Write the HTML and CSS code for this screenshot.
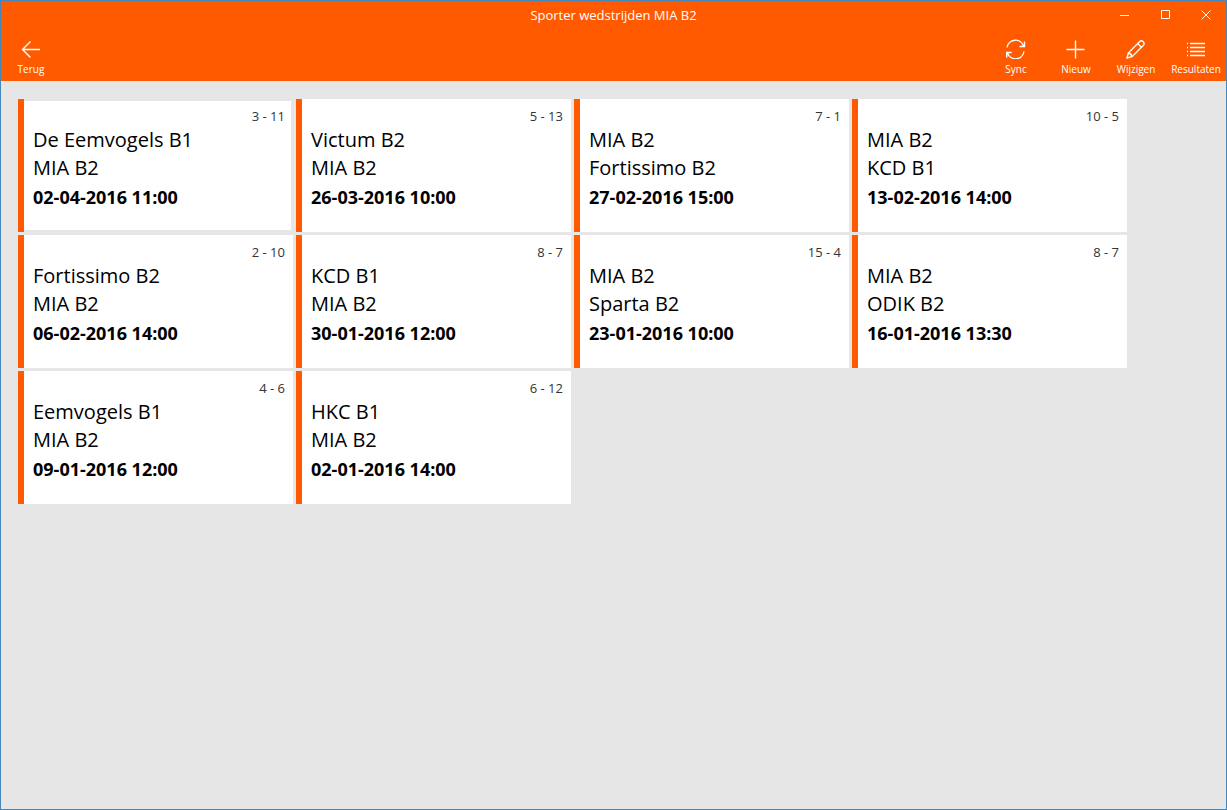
FILE: index.html
```html
<!DOCTYPE html>
<html lang="nl">
<head>
<meta charset="utf-8">
<meta name="viewport" content="width=device-width, initial-scale=1">
<title>Sporter wedstrijden MIA B2</title>
<link rel="stylesheet" href="styles.css">
</head>
<body>
<div class="window">
  <header class="header">
    <div class="titlebar">
      <h1 class="title">Sporter wedstrijden MIA B2</h1>
      <div class="window-controls">
        <button class="window-button" type="button" aria-label="Minimaliseren"><svg width="10" height="10" viewBox="0 0 10 10"><path d="M1 5.5h9"/></svg></button>
        <button class="window-button" type="button" aria-label="Maximaliseren"><svg width="10" height="10" viewBox="0 0 10 10"><path d="M1.500 .5h8v8h-8z"/></svg></button>
        <button class="window-button" type="button" aria-label="Sluiten"><svg width="10" height="10" viewBox="0 0 10 10"><path d="M.5 .5l9 9M9.500 .5l-9 9"/></svg></button>
      </div>
    </div>
    <nav class="commands">
      <button class="command" type="button">
        <svg width="20" height="20" viewBox="0 0 20 20"><path d="M19 10.500H1.500M9.500 2.500l-8 8 8 8"/></svg>
        <span>Terug</span>
      </button>
      <div class="command-group">
        <button class="command" type="button">
          <svg width="20" height="20" viewBox="0 0 20 20"><path d="M1 8.500A8.500 8.500 0 0 1 17.500 7M18.500 2.500v5h-5M18 12.500A8.500 8.500 0 0 1 1.500 14M.7 18.500v-5h5"/></svg>
          <span>Sync</span>
        </button>
        <button class="command" type="button">
          <svg width="20" height="20" viewBox="0 0 20 20"><path d="M9.500 1.500v18M.5 10.500h18"/></svg>
          <span>Nieuw</span>
        </button>
        <button class="command" type="button">
          <svg width="20" height="20" viewBox="0 0 20 20"><path d="M1 19l1.300-5L13.500 2.700a2.500 2.500 0 0 1 3.700 3.700L6 17.700zM11.700 4.500l3.700 3.700M2.300 14q3 .5 3.700 3.700"/></svg>
          <span>Wijzigen</span>
        </button>
        <button class="command" type="button">
          <svg width="20" height="20" viewBox="0 0 20 20"><path d="M4 4.500h15M4 8.500h15M4 12.500h15M4 16.500h15M1 4.500h1M1 8.500h1M1 12.500h1M1 16.500h1"/></svg>
          <span>Resultaten</span>
        </button>
      </div>
    </nav>
  </header>
  <main class="content">
    <ul class="matches">
      <li class="match match-focused"><span class="score">3 - 11</span><span class="team">De Eemvogels B1</span><span class="team">MIA B2</span><time class="date">02-04-2016 11:00</time></li>
      <li class="match"><span class="score">5 - 13</span><span class="team">Victum B2</span><span class="team">MIA B2</span><time class="date">26-03-2016 10:00</time></li>
      <li class="match"><span class="score">7 - 1</span><span class="team">MIA B2</span><span class="team">Fortissimo B2</span><time class="date">27-02-2016 15:00</time></li>
      <li class="match"><span class="score">10 - 5</span><span class="team">MIA B2</span><span class="team">KCD B1</span><time class="date">13-02-2016 14:00</time></li>
      <li class="match"><span class="score">2 - 10</span><span class="team">Fortissimo B2</span><span class="team">MIA B2</span><time class="date">06-02-2016 14:00</time></li>
      <li class="match"><span class="score">8 - 7</span><span class="team">KCD B1</span><span class="team">MIA B2</span><time class="date">30-01-2016 12:00</time></li>
      <li class="match"><span class="score">15 - 4</span><span class="team">MIA B2</span><span class="team">Sparta B2</span><time class="date">23-01-2016 10:00</time></li>
      <li class="match"><span class="score">8 - 7</span><span class="team">MIA B2</span><span class="team">ODIK B2</span><time class="date">16-01-2016 13:30</time></li>
      <li class="match"><span class="score">4 - 6</span><span class="team">Eemvogels B1</span><span class="team">MIA B2</span><time class="date">09-01-2016 12:00</time></li>
      <li class="match"><span class="score">6 - 12</span><span class="team">HKC B1</span><span class="team">MIA B2</span><time class="date">02-01-2016 14:00</time></li>
    </ul>
  </main>
</div>
</body>
</html>
```
FILE: styles.css
```css
* {
  box-sizing: border-box;
}

body {
  margin: 0;
  font-family: "Segoe UI", "Open Sans", "Noto Sans", sans-serif;
  color: #000;
}

.window {
  min-height: 100vh;
  border: 1px solid #4586bb;
  background: #e6e6e6;
}

.header {
  background: #ff5a00;
  color: #fff;
}

.titlebar {
  display: grid;
  grid-template-columns: 1fr auto 1fr;
  align-items: center;
  height: 27px;
}

.title {
  grid-column: 2;
  margin: 0;
  font-size: 13px;
  font-weight: 400;
  line-height: 20px;
}

.window-controls {
  display: flex;
  justify-content: flex-end;
}

.window-button,
.command {
  border: 0;
  padding: 0;
  background: none;
  color: inherit;
  font: inherit;
}

.window-button {
  display: flex;
  align-items: center;
  justify-content: center;
  width: 41px;
  height: 28px;
}

.header svg {
  fill: none;
  stroke: #fff;
  stroke-width: 1;
}

.header .command svg {
  stroke-width: 1.4;
}

.commands {
  display: flex;
  justify-content: space-between;
}

.command-group {
  display: flex;
}

.command {
  display: flex;
  flex-direction: column;
  align-items: center;
  gap: 2px;
  width: 60px;
  padding: 11px 0 4px;
  font-size: 10px;
  line-height: 16px;
}

.content {
  padding: 18px 17px;
}

.matches {
  display: grid;
  grid-template-columns: repeat(auto-fill, 275px);
  gap: 3px;
  margin: 0;
  padding: 0;
  list-style: none;
}

.match {
  display: flex;
  flex-direction: column;
  min-height: 133px;
  padding: 7px 8px 0 9px;
  border-left: 6px solid #ff5a00;
  background: #fff;
}

.match-focused {
  box-shadow: inset -2px -2px #e6e6e6, inset 0 2px #e6e6e6;
}

.score {
  align-self: flex-end;
  color: #333;
  font-size: 13px;
  line-height: 20px;
}

.team {
  font-size: 20px;
  line-height: 28px;
}

.date {
  font-size: 18px;
  font-weight: 700;
  line-height: 30px;
}
```
